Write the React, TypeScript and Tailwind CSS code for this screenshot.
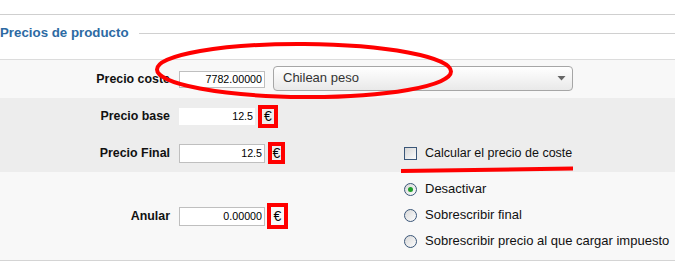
import React from "react";

const Euro = ({ w, h, ml }: { w: string; h: string; ml: string }) => (
  <span
    className={`inline-flex items-center justify-center border-[4px] border-[#ff0000] text-[14px] leading-none text-black ${w} ${h} ${ml}`}
  >
    €
  </span>
);

const Radio = ({ checked }: { checked?: boolean }) => (
  <span className="relative inline-flex h-[13px] w-[13px] items-center justify-center rounded-full border border-[#3a5678] bg-gradient-to-br from-[#d8d8d8] to-[#fdfdfd]">
    {checked && <span className="h-[5px] w-[5px] rounded-full bg-[#1f9e2a]" />}
  </span>
);

export default function App() {
  return (
    <div
      className="relative h-[277px] w-[675px] overflow-hidden bg-white text-[#111]"
      style={{ fontFamily: '"Liberation Sans", Arial, sans-serif' }}
    >
      <div className="h-[14px]" />
      <div className="border-t border-[#cfcfcf]" />
      {/* Title */}
      <div className="flex h-[36px] items-center">
        <span className="text-[13.3px] font-bold text-[#2d6aa3]">Precios de producto</span>
        <div className="ml-[10px] h-px flex-1 bg-[#d0d0d0]" />
      </div>
      <div className="h-[8px]" />

      {/* Row 1 */}
      <div className="flex h-[39px] items-center border-t border-[#dcdcdc] bg-[#f8f8f8]">
        <div className="w-[170px] text-right text-[12.4px] font-bold">Precio coste</div>
        <input
          readOnly
          value="7782.00000"
          className="ml-[9px] h-[17px] w-[86px] border border-[#bfbfbf] bg-white px-[2px] text-right text-[10.7px] text-black outline-none"
        />
        <div className="ml-[8px] flex h-[25px] w-[300px] -translate-y-[1px] items-center justify-between rounded-[4px] border border-[#a6a6a6] bg-gradient-to-b from-white to-[#e9e9e9] pl-[9px] pr-[6px]">
          <span className="text-[13px] text-[#333]">Chilean peso</span>
          <svg width="9" height="6" viewBox="0 0 9 6">
            <path d="M0.5 1 L8.5 1 L4.5 5.5 Z" fill="#666" />
          </svg>
        </div>
      </div>

      {/* Row 2 */}
      <div className="flex flex-col bg-[#ededed]">
        <div className="flex h-[36px] items-center">
          <div className="w-[170px] text-right text-[12.4px] font-bold">Precio base</div>
          <input
            readOnly
            value="12.5"
            className="ml-[9px] h-[17px] w-[76px] bg-white px-[2px] text-right text-[10.7px] text-black outline-none"
          />
          <Euro w="w-[20px]" h="h-[23px]" ml="ml-[3px]" />
        </div>
        <div className="flex h-[38px] items-center">
          <div className="w-[170px] text-right text-[12.4px] font-bold">Precio Final</div>
          <div className="flex w-[234px] items-center pl-[9px]">
            <input
              readOnly
              value="12.5"
              className="h-[19px] w-[86px] border border-[#bfbfbf] bg-white px-[2px] text-right text-[10.7px] text-black outline-none"
            />
            <Euro w="w-[17px]" h="h-[22px]" ml="ml-[3px]" />
          </div>
          <span className="inline-flex h-[13px] w-[13px] border border-[#3a5678] bg-gradient-to-br from-[#d6d6d6] to-[#fcfcfc]" />
          <span className="ml-[8px] text-[12.5px]">Calcular el precio de coste</span>
        </div>
      </div>

      {/* Row 3 */}
      <div className="flex h-[89px] items-center border-b border-[#d4d4d4] bg-[#f8f8f8]">
        <div className="w-[170px] text-right text-[12.4px] font-bold">Anular</div>
        <div className="flex w-[234px] items-center pl-[9px]">
          <input
            readOnly
            value="0.00000"
            className="h-[19px] w-[86px] border border-[#bfbfbf] bg-white px-[2px] text-right text-[10.7px] text-black outline-none"
          />
          <Euro w="w-[21px]" h="h-[26px]" ml="ml-[2px]" />
        </div>
        <div className="flex flex-col pb-[2px] text-[13px]">
          <label className="flex h-[26px] items-center">
            <Radio checked />
            <span className="ml-[8px]">Desactivar</span>
          </label>
          <label className="flex h-[26px] items-center">
            <Radio />
            <span className="ml-[8px]">Sobrescribir final</span>
          </label>
          <label className="flex h-[26px] items-center">
            <Radio />
            <span className="ml-[8px]">Sobrescribir precio al que cargar impuesto</span>
          </label>
        </div>
      </div>

      {/* Red annotations */}
      <svg
        className="pointer-events-none absolute left-0 top-0"
        width="675"
        height="277"
        viewBox="0 0 675 277"
      >
        <ellipse cx="304" cy="70.5" rx="147" ry="26.5" fill="none" stroke="#ff0000" strokeWidth="4" transform="rotate(0.4 304 70.5)" />
        <path d="M401 171 L573 168.5" stroke="#ff0000" strokeWidth="4" fill="none" />
      </svg>
    </div>
  );
}
